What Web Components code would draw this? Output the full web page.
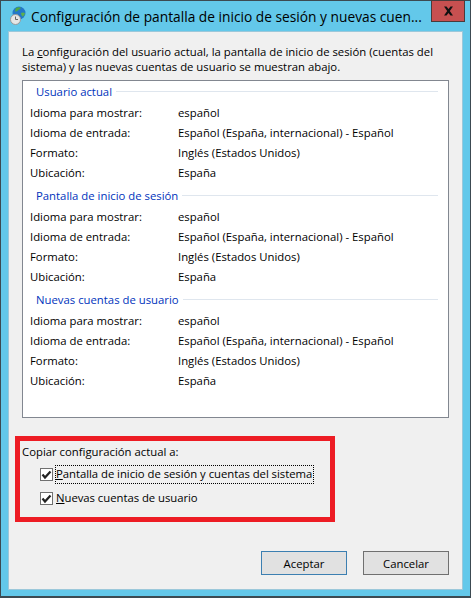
<!DOCTYPE html>
<html>
<head>
<meta charset="utf-8">
<title>Configuración</title>
<style>
  html, body { margin: 0; padding: 0; background: #63c8ea; }
  body { font: 11.33px "Open Sans", "Noto Sans", sans-serif; color: #000; }
</style>
</head>
<body>
<win-dialog>
  <win-titlebar slot="title">Configuración de pantalla de inicio de sesión y nuevas cuen...</win-titlebar>

  <p-intro><span>La <u>c</u>onfiguración del usuario actual, la pantalla de inicio de sesión (cuentas del<br>sistema) y las nuevas cuentas de usuario se muestran abajo.</span></p-intro>

  <settings-panel>
    <settings-group heading="Usuario actual">
      <settings-row label="Idioma para mostrar:">español</settings-row>
      <settings-row label="Idioma de entrada:">Español (España, internacional) - Español</settings-row>
      <settings-row label="Formato:">Inglés (Estados Unidos)</settings-row>
      <settings-row label="Ubicación:">España</settings-row>
    </settings-group>
    <settings-group heading="Pantalla de inicio de sesión">
      <settings-row label="Idioma para mostrar:">español</settings-row>
      <settings-row label="Idioma de entrada:">Español (España, internacional) - Español</settings-row>
      <settings-row label="Formato:">Inglés (Estados Unidos)</settings-row>
      <settings-row label="Ubicación:">España</settings-row>
    </settings-group>
    <settings-group heading="Nuevas cuentas de usuario">
      <settings-row label="Idioma para mostrar:">español</settings-row>
      <settings-row label="Idioma de entrada:">Español (España, internacional) - Español</settings-row>
      <settings-row label="Formato:">Inglés (Estados Unidos)</settings-row>
      <settings-row label="Ubicación:">España</settings-row>
    </settings-group>
  </settings-panel>

  <copy-box>
    <span slot="heading">Copiar configuración actual a:</span>
    <win-check focused><u>P</u>antalla de inicio de sesión y cuentas del sistema</win-check>
    <win-check><u>N</u>uevas cuentas de usuario</win-check>
  </copy-box>

  <button-row>
    <win-button primary>Aceptar</win-button>
    <win-button>Cancelar</win-button>
  </button-row>
</win-dialog>

<script>
const define = (name, css, html, init) => {
  customElements.define(name, class extends HTMLElement {
    constructor () {
      super()
      const root = this.attachShadow({ mode: 'open' })
      root.innerHTML = `<style>${css}</style>${html}`
    }
    connectedCallback () {
      if (init) init(this, this.shadowRoot)
    }
  })
}

define('win-dialog', `
  :host { display: block; box-sizing: border-box; width: 471px; height: 598px; background: #63c8ea;
    border: 1px solid #3c4a52; border-bottom-width: 2px; }
  .body { box-sizing: border-box; margin: 0 7px; width: 455px; height: 559px; background: #f0f0f0;
    border: 1px solid #9cc8da; padding: 0 13px 0 6px; display: flex; flex-direction: column; }
`, `<slot name="title"></slot><div class="body"><slot></slot></div>`)

define('win-titlebar', `
  :host { display: flex; align-items: center; height: 30px; color: #000; position: relative;
    font: 13.75px "Open Sans", sans-serif; white-space: nowrap; }
  svg { margin: 0 5px 0 9px; flex: none; }
  .close { position: absolute; top: -1px; right: 5px; width: 34px; height: 22px; box-sizing: border-box;
    background: #c75050; border: 1px solid #4a3a3a; display: flex; align-items: center; justify-content: center; }
`, `<svg width="16" height="20" viewBox="0 0 16 20">
    <circle cx="9" cy="7" r="6.500" fill="#2478c8"/>
    <path d="M6 2c1.500-1 4-1 5 0c-1 1.500-2 .8-3 2.500c-1 1-2 .5-2.500 1.500c-.5-1-.3-3 .5-4z" fill="#4fa845"/>
    <path d="M11 7c1.500-.8 3-.8 4 .5c-.5 1.500-1.500 3-2.500 3c-.8-.8-1.500-2-1.500-3.500z" fill="#5cb04e"/>
    <circle cx="5.500" cy="13.500" r="5" fill="#e6e6e6" stroke="#9a9a9a"/>
    <path d="M5.500 10.500v3h2.500" fill="none" stroke="#666"/>
  </svg><span><slot></slot></span>
  <div class="close"><svg style="margin:0" width="11" height="10" viewBox="0 0 11 10"><path d="M1 .500h2.500l2 2.500l2-2.500h2.500l-3.200 4.500l3.200 4.500h-2.500l-2-2.500l-2 2.500h-2.500l3.200-4.500z" fill="#111"/></svg></div>`)

define('p-intro', `
  :host { display: block; height: 36px; padding: 12px 0 0 7px; line-height: 15px; white-space: nowrap; }
`, `<slot></slot>`)

define('settings-panel', `
  :host { display: block; box-sizing: border-box; width: 427px; height: 338px; margin: 0 0 0 7px; flex: none;
    background: #fff; border: 1px solid #828790; padding: 1px 0 0 0; }
`, `<slot></slot>`)

define('settings-group', `
  :host { display: block; margin-bottom: 4px; }
  .head { box-sizing: border-box; display: flex; align-items: center; height: 20px; padding: 0 10px 2px 13px; color: #0033bc; gap: 4px; }
  .head i { flex: 1; height: 1px; background: #dfe6ee; }
  .rows { display: block; }
`, `<div class="head"><span id="h"></span><i></i></div><div class="rows"><slot></slot></div>`,
  (el, root) => { root.getElementById('h').textContent = el.getAttribute('heading') })

define('settings-row', `
  :host { display: flex; height: 20px; align-items: center; padding-left: 7px; white-space: nowrap; }
  .label { width: 148px; flex: none; }
`, `<span class="label" id="l"></span><span><slot></slot></span>`,
  (el, root) => { root.getElementById('l').textContent = el.getAttribute('label') })

define('copy-box', `
  :host { display: block; box-sizing: border-box; width: 320px; height: 86px; margin-top: 18px; flex: none;
    border: 5px solid #ed1c24; padding: 1px 0 0 2px; }
  .h { height: 20px; line-height: 20px; white-space: nowrap; }
  .list { display: flex; flex-direction: column; gap: 6px; margin: 3px 0 0 18px; }
`, `<div class="h"><slot name="heading"></slot></div><div class="list"><slot></slot></div>`)

define('win-check', `
  :host { display: flex; align-items: center; height: 18px; white-space: nowrap; }
  .box { width: 13px; height: 13px; box-sizing: border-box; border: 1px solid #707070; background: #fff; flex: none;
    margin-right: 3px; display: flex; }
  .txt { padding: 0 1px 1px 0; line-height: 16px; letter-spacing: -.04px; outline: 1px dotted transparent; }
  :host([focused]) .txt { outline-color: #000; outline-offset: 0; }
`, `<span class="box"><svg width="11" height="11" viewBox="0 0 11 11"><path d="M1.500 5.500l2.500 3l5.500-6" fill="none" stroke="#222" stroke-width="2.200"/></svg></span><span class="txt"><slot></slot></span>`)

define('button-row', `
  :host { display: flex; justify-content: flex-end; gap: 16px; margin-top: 29px; }
`, `<slot></slot>`)

define('win-button', `
  :host { display: flex; align-items: center; justify-content: center; box-sizing: border-box; width: 86px; height: 24px;
    background: #e1e1e1; border: 1px solid #707070; }
  :host([primary]) { border-color: #3c7fb1; }
`, `<slot></slot>`)
</script>
</body>
</html>
